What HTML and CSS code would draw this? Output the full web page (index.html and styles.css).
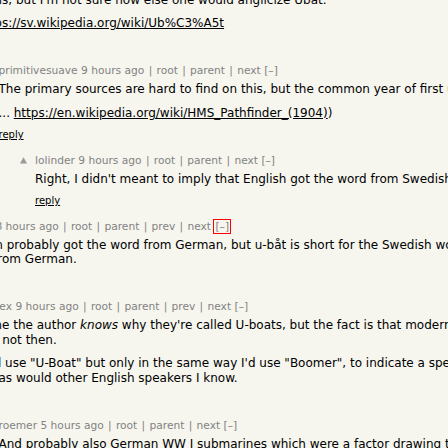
FILE: index.html
```html
<!DOCTYPE html>
<html>
<head>
<meta charset="utf-8">
<link rel="stylesheet" href="styles.css">
</head>
<body>
<div class="thread">

  <div class="comment">
    <div class="ind l0"></div>
    <div class="votes"><svg class="arrow" width="7" height="7" viewBox="0 0 7 7"><path d="M3.5 0.3 L7 6.6 H0 Z"/></svg></div>
    <div class="body">
      <div class="comhead"><a class="user">kyrenn</a> <span class="age">9 hours ago</span> <span class="sep">|</span> <a>parent</a> <span class="sep">|</span> <a>next</a> <a class="togg">[–]</a></div>
      <div class="commtext">
        <div>like this, but I'm not sure how else one would anglicize Ubåt.</div>
        <p>1. <a class="lnk">https://sv.wikipedia.org/wiki/Ub%C3%A5t</a></p>
      </div>
      <div class="reply"><a>reply</a></div>
    </div>
  </div>

  <div class="comment">
    <div class="ind l1"></div>
    <div class="votes"><svg class="arrow" width="7" height="7" viewBox="0 0 7 7"><path d="M3.5 0.3 L7 6.6 H0 Z"/></svg></div>
    <div class="body">
      <div class="comhead"><a class="user">primitivesuave</a> <span class="age">9 hours ago</span> <span class="sep">|</span> <a>root</a> <span class="sep">|</span> <a>parent</a> <span class="sep">|</span> <a>next</a> <a class="togg">[–]</a></div>
      <div class="commtext">
        <div>The primary sources are hard to find on this, but the common year of first use is 1914.</div>
        <p>... <a class="lnk">https://en.wikipedia.org/wiki/HMS_Pathfinder_(1904)</a>)</p>
      </div>
      <div class="reply"><a>reply</a></div>
    </div>
  </div>

  <div class="comment">
    <div class="ind l2"></div>
    <div class="votes"><svg class="arrow" width="7" height="7" viewBox="0 0 7 7"><path d="M3.5 0.3 L7 6.6 H0 Z"/></svg></div>
    <div class="body">
      <div class="comhead"><a class="user">lolinder</a> <span class="age">9 hours ago</span> <span class="sep">|</span> <a>root</a> <span class="sep">|</span> <a>parent</a> <span class="sep">|</span> <a>next</a> <a class="togg">[–]</a></div>
      <div class="commtext">
        <div>Right, I didn't meant to imply that English got the word from Swedish.</div>
      </div>
      <div class="reply"><a>reply</a></div>
    </div>
  </div>

  <div class="comment">
    <div class="ind l0"></div>
    <div class="votes"><svg class="arrow" width="7" height="7" viewBox="0 0 7 7"><path d="M3.5 0.3 L7 6.6 H0 Z"/></svg></div>
    <div class="body">
      <div class="comhead"><a class="user">tapox</a> <span class="age">8 hours ago</span> <span class="sep">|</span> <a>root</a> <span class="sep">|</span> <a>parent</a> <span class="sep">|</span> <a>prev</a> <span class="sep">|</span> <a>next</a> <a class="togg focused">[–]</a></div>
      <div class="commtext">
        <div>Is then probably got the word from German, but u-båt is short for the Swedish word undervattensbåt, which came<br>then from German.</div>
      </div>
      <div class="reply"><a>reply</a></div>
    </div>
  </div>

  <div class="comment">
    <div class="ind l0"></div>
    <div class="votes"><svg class="arrow" width="7" height="7" viewBox="0 0 7 7"><path d="M3.5 0.3 L7 6.6 H0 Z"/></svg></div>
    <div class="body">
      <div class="comhead"><a class="user">hyperdex</a> <span class="age">9 hours ago</span> <span class="sep">|</span> <a>root</a> <span class="sep">|</span> <a>parent</a> <span class="sep">|</span> <a>prev</a> <span class="sep">|</span> <a>next</a> <a class="togg">[–]</a></div>
      <div class="commtext">
        <div>Assume the author <i>knows</i> why they're called U-boats, but the fact is that modern speakers know it,<br>surely not then.</div>
        <p>I'd still use "U-Boat" but only in the same way I'd use "Boomer", to indicate a specific generation,<br>same as would other English speakers I know.</p>
      </div>
      <div class="reply"><a>reply</a></div>
    </div>
  </div>

  <div class="comment">
    <div class="ind l1"></div>
    <div class="votes"><svg class="arrow" width="7" height="7" viewBox="0 0 7 7"><path d="M3.5 0.3 L7 6.6 H0 Z"/></svg></div>
    <div class="body">
      <div class="comhead"><a class="user">roemer</a> <span class="age">5 hours ago</span> <span class="sep">|</span> <a>root</a> <span class="sep">|</span> <a>parent</a> <span class="sep">|</span> <a>next</a> <a class="togg">[–]</a></div>
      <div class="commtext">
        <div>And probably also German WW I submarines which were a factor drawing the US into the war.</div>
      </div>
      <div class="reply"><a>reply</a></div>
    </div>
  </div>

</div>
</body>
</html>
```

FILE: styles.css
```css
html, body {
  margin: 0;
  padding: 0;
  background: #f6f6ef;
  overflow: hidden;
}

body {
  width: 448px;
  height: 448px;
  font-family: "DejaVu Sans", Verdana, sans-serif;
  color: #000;
}

.thread {
  margin-top: -25.5px;
  margin-left: -54px;
}

.comment {
  display: flex;
  align-items: flex-start;
  margin-bottom: 12.5px;
}

.ind { flex: none; }
.l0 { width: 0; }
.l1 { width: 36.5px; }
.l2 { width: 73px; }

.votes {
  flex: none;
  width: 16px;
}

.arrow {
  display: block;
  margin: 3.5px 0 0 1px;
  fill: #9a9a9a;
}

.body {
  flex: none;
}

.comhead {
  font-size: 8pt;
  line-height: 13px;
  color: #828282;
  white-space: nowrap;
}

.comhead a {
  color: #828282;
}

.sep {
  padding: 0 0.9px;
}

.togg.focused {
  outline: 1px solid #f00;
  outline-offset: 0;
  padding: 0 1px;
}

.commtext {
  margin-top: 5.25px;
  font-size: 12px;
  line-height: 14.5px;
  white-space: nowrap;
}

.commtext p {
  margin: 9px 0 0;
}

.lnk {
  color: #000;
  text-decoration: underline;
}

.reply {
  margin-top: 8.75px;
  font-size: 10px;
  line-height: 12px;
}

.reply a {
  color: #000;
  text-decoration: underline;
}
```
